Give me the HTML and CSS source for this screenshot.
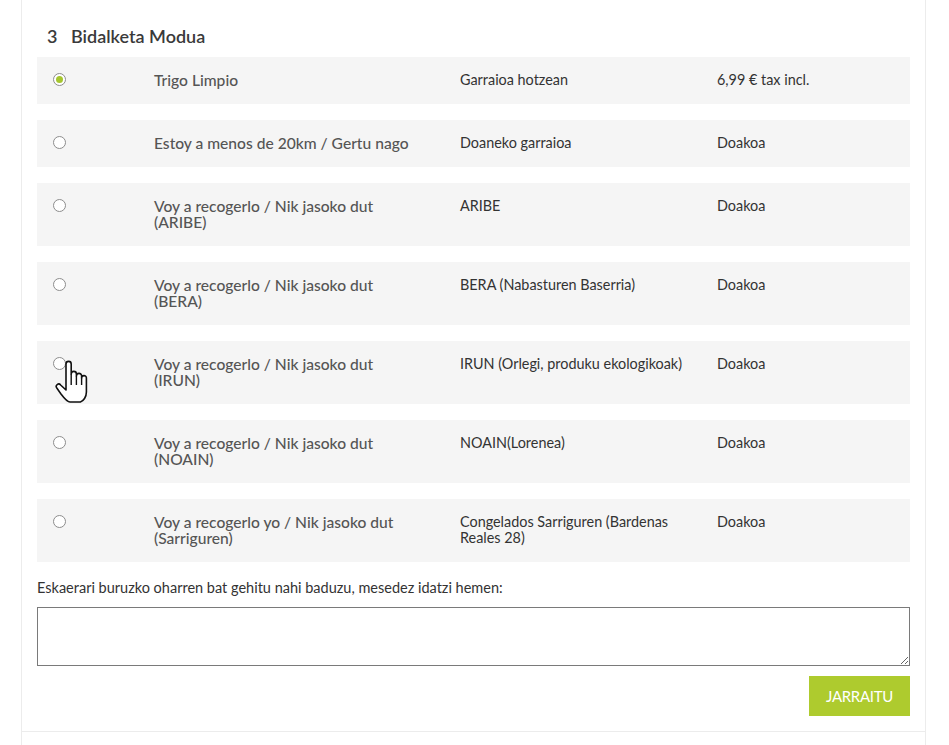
FILE: index.html
```html
<!DOCTYPE html>
<html lang="eu">
<head>
<meta charset="utf-8">
<title>Bidalketa Modua</title>
<link rel="stylesheet" href="styles.css">
</head>
<body>
<div class="panel">
  <section class="step">
    <h2 class="step-title"><span class="step-num">3</span>Bidalketa Modua</h2>
    <div class="options">
      <label class="option">
        <span class="radio checked"></span>
        <span class="name">Trigo Limpio</span>
        <span class="delay">Garraioa hotzean</span>
        <span class="price">6,99 € tax incl.</span>
      </label>
      <label class="option">
        <span class="radio"></span>
        <span class="name">Estoy a menos de 20km / Gertu nago</span>
        <span class="delay">Doaneko garraioa</span>
        <span class="price">Doakoa</span>
      </label>
      <label class="option">
        <span class="radio"></span>
        <span class="name">Voy a recogerlo / Nik jasoko dut (ARIBE)</span>
        <span class="delay">ARIBE</span>
        <span class="price">Doakoa</span>
      </label>
      <label class="option">
        <span class="radio"></span>
        <span class="name">Voy a recogerlo / Nik jasoko dut (BERA)</span>
        <span class="delay">BERA (Nabasturen Baserria)</span>
        <span class="price">Doakoa</span>
      </label>
      <label class="option">
        <span class="radio"></span>
        <span class="name">Voy a recogerlo / Nik jasoko dut (IRUN)</span>
        <span class="delay">IRUN (Orlegi, produku ekologikoak)</span>
        <span class="price">Doakoa</span>
        <svg class="cursor" width="34" height="46" viewBox="0 0 34 46" aria-hidden="true">
          <path d="M11,5 a2.6,2.6 0 0 1 5.2,0 V15 a2.6,2.6 0 0 1 5.2,0 V17 a2.6,2.6 0 0 1 5.2,0 V19 a2.4,2.4 0 0 1 4.8,0 V33 c0,5 -3,9 -6,10 H15 c-3,0 -6,-4 -9,-8 L1.8,29 a2.4,2.4 0 0 1 3.8,-3 L11,31 Z" fill="#fff" stroke="#111" stroke-width="1.6" stroke-linejoin="round"/>
          <path d="M16.2,15 V26 M21.4,17 V26 M26.6,19 V26" fill="none" stroke="#111" stroke-width="1.4"/>
        </svg>
      </label>
      <label class="option">
        <span class="radio"></span>
        <span class="name">Voy a recogerlo / Nik jasoko dut (NOAIN)</span>
        <span class="delay">NOAIN(Lorenea)</span>
        <span class="price">Doakoa</span>
      </label>
      <label class="option">
        <span class="radio"></span>
        <span class="name">Voy a recogerlo yo / Nik jasoko dut (Sarriguren)</span>
        <span class="delay">Congelados Sarriguren (Bardenas Reales 28)</span>
        <span class="price">Doakoa</span>
      </label>
    </div>
    <p class="note-label">Eskaerari buruzko oharren bat gehitu nahi baduzu, mesedez idatzi hemen:</p>
    <textarea class="note"></textarea>
    <div class="actions">
      <button class="btn" type="button">JARRAITU</button>
    </div>
  </section>
</div>
</body>
</html>
```
FILE: styles.css
```css
html, body {
  margin: 0;
  padding: 0;
  background: #fff;
  font-family: Lato, "Open Sans", sans-serif;
  color: #333;
}

.panel {
  margin-left: 21px;
  width: 903px;
  border-left: 1px solid #ececec;
  border-right: 1px solid #ececec;
  min-height: 745px;
}

.step {
  padding: 0 15px 15px;
  border-bottom: 1px solid #ececec;
}

.step-title {
  margin: 0;
  padding: 25px 0 0 10px;
  height: 32px;
  font-size: 18px;
  font-weight: 600;
  line-height: 22px;
  color: #3a3a3a;
}

.step-num {
  display: inline-block;
  width: 24px;
}

.options {
  display: flex;
  flex-direction: column;
  gap: 16px;
}

.option {
  position: relative;
  display: grid;
  grid-template-columns: 117px 306px 257px 1fr;
  align-items: start;
  background: #f5f5f5;
  padding: 15px 0 16px;
  font-size: 14.4px;
  line-height: 16px;
}

.radio {
  margin: 1px 0 0 16px;
  width: 13px;
  height: 13px;
  box-sizing: border-box;
  border: 1px solid #8d8d8d;
  border-radius: 50%;
  background: #fff;
  position: relative;
}

.radio.checked::after {
  content: "";
  position: absolute;
  left: 2px;
  top: 2px;
  width: 7px;
  height: 7px;
  border-radius: 50%;
  background: #a6c62f;
}

.name {
  font-size: 15.6px;
  font-weight: 500;
  color: #555;
  padding-right: 46px;
}

.delay {
  color: #333;
  padding-right: 22px;
}

.price {
  color: #333;
}

.cursor {
  position: absolute;
  left: 18px;
  top: 18px;
}

.note-label {
  margin: 17px 0 11px;
  font-size: 14.5px;
  line-height: 17px;
  color: #333;
}

.note {
  display: block;
  width: 100%;
  height: 59px;
  box-sizing: border-box;
  border: 1px solid #7a7a7a;
  margin: 0;
  font-family: inherit;
}

.actions {
  display: flex;
  justify-content: flex-end;
  padding-top: 10px;
}

.btn {
  width: 101px;
  height: 40px;
  border: 0;
  background: #aecb2e;
  color: #fff;
  font-family: Lato, sans-serif;
  font-size: 15px;
  letter-spacing: -0.3px;
  cursor: pointer;
}
```
